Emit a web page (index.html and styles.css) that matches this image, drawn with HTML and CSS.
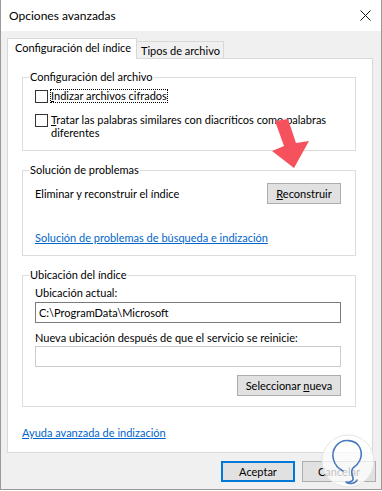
FILE: index.html
```html
<!DOCTYPE html>
<html>
<head>
    <title>Opciones avanzadas</title>
    <link rel="stylesheet" href="styles.css">
</head>
<body>
    <div class="window">
        <div class="titlebar">
            <span class="title">Opciones avanzadas</span>
            <svg class="close" width="11" height="11" viewBox="0 0 11 11">
                <path d="M0.5 0.5 L10.5 10.5 M10.5 0.5 L0.5 10.5" stroke="#111" stroke-width="1" fill="none"/>
            </svg>
        </div>

        <div class="tabs">
            <div class="tab active">Configuración del índice</div>
            <div class="tab">Tipos de archivo</div>
        </div>

        <div class="panel">
            <fieldset class="group first">
                <legend>Configuración del archivo</legend>
                <label class="check">
                    <span class="box"></span>
                    <span class="focus"><u>I</u>ndizar archivos cifrados</span>
                </label>
                <label class="check two">
                    <span class="box"></span>
                    <span class="text"><u>T</u>ratar las palabras similares con diacríticos como palabras<br>diferentes</span>
                </label>
            </fieldset>

            <fieldset class="group">
                <legend>Solución de problemas</legend>
                <div class="row">
                    <span>Eliminar y reconstruir el índice</span>
                    <button class="btn"><u>R</u>econstruir</button>
                </div>
                <a class="link trouble" href="#">Solución de problemas de búsqueda e indización</a>
            </fieldset>

            <fieldset class="group">
                <legend>Ubicación del índice</legend>
                <div class="label first-label">Ubicación actual:</div>
                <div class="textbox">C:\ProgramData\Microsoft</div>
                <div class="label">Nueva ubicación después de que el servicio se reinicie:</div>
                <div class="textbox disabled"></div>
                <div class="right">
                    <button class="btn wide">Seleccionar <u>n</u>ueva</button>
                </div>
            </fieldset>

            <a class="link help" href="#">Ayuda avanzada de indización</a>
        </div>

        <div class="actions">
            <button class="btn default">Aceptar</button>
            <button class="btn">Cancelar</button>
        </div>

        <!-- red pointer over the dialog -->
        <svg class="arrow" width="382" height="491" viewBox="0 0 382 491">
            <polygon points="275,121 288,119 296,143 309,141 294,168 272,151 284,146" fill="#f5525d"/>
        </svg>

        <!-- watermark -->
        <svg class="mark" width="56" height="58" viewBox="0 0 56 58">
            <circle cx="27" cy="29" r="26" fill="#ffffff" fill-opacity="0.75" stroke="#e4e4e4" stroke-width="1"/>
            <path d="M22 39 C12 34 9 22 15 14 C21 6 35 7 39 16 C43 25 37 33 32 36 C30 38 31 43 32 46 C33 49 28 51 25 50 C29 53 35 51 36 48"
                  stroke="#4a78bd" stroke-width="1.6" fill="none" stroke-linecap="round" stroke-linejoin="round"/>
        </svg>
    </div>
</body>
</html>
```

FILE: styles.css
```css
* { box-sizing: border-box; }
body { margin: 0; font-family: "Segoe UI", Lato, "Liberation Sans", sans-serif; font-size: 11px; color: #000; }

.window { position: relative; width: 382px; height: 490px; background: #f0f0f0; border: 1px solid #9a9a9a; border-top: none; }

.titlebar { height: 31px; background: #fff; display: flex; align-items: center; justify-content: space-between; padding: 0 10px 0 8px; }
.title { font-size: 12px; line-height: 14px; }
.close { display: block; margin-top: -1px; }

.tabs { display: flex; align-items: flex-end; margin-top: 7px; padding-left: 6px; height: 20px; white-space: nowrap; }
.tab { height: 17px; line-height: 14px; padding: 2px 0 0 4px; border: 1px solid #d9d9d9; border-bottom: none; background: #f0f0f0; width: 88px; margin-left: -1px; }
.tab.active { position: relative; z-index: 1; height: 21px; width: 130px; margin: 0 0 -1px 0; padding: 2px 0 0 7px; background: #fff; }

.panel { width: 366px; margin-left: 6px; background: #fff; border: 1px solid #d9d9d9; padding: 11px 0 12px 0; }

.group { margin: 12px 16px 0 14px; padding: 6px 14px 10px 12px; border: 1px solid #dcdcdc; min-width: 0; }
.group.first { margin-top: 0; padding-top: 5px; padding-bottom: 11px; }
.group legend { padding: 0 1px; margin-left: -6px; line-height: 14px; }

.check { display: flex; align-items: flex-start; line-height: 14px; white-space: nowrap; }
.check .box { width: 13px; height: 13px; border: 1px solid #333; background: #fff; margin-top: 1px; flex: none; }
.check .focus { margin-left: 2px; padding: 0 1px; outline: 1px dotted #000; outline-offset: -1px; }
.check.two { margin-top: 10px; line-height: 13px; }
.check .text { margin-left: 3px; }

.row { display: flex; align-items: center; justify-content: space-between; height: 21px; }
.btn { font-family: inherit; font-size: 11px; color: #000; width: 74px; height: 21px; padding: 0; background: #e1e1e1; border: 1px solid #adadad; line-height: 14px; white-space: nowrap; }
.btn.wide { width: 104px; }
.btn.default { border: 2px solid #0078d7; }

.link { display: block; color: #0066cc; text-decoration: underline; line-height: 14px; white-space: nowrap; }
.trouble { margin-top: 27px; }
.help { margin: 19px 0 0 14px; width: max-content; }

.label { line-height: 14px; margin-top: 8px; white-space: nowrap; }
.label.first-label { margin-top: -2px; }
.textbox { height: 21px; border: 1px solid #7a7a7a; padding: 2px 0 0 3px; line-height: 15px; margin-top: 2px; }
.textbox.disabled { border-color: #cccccc; margin-top: 1px; }
.right { display: flex; justify-content: flex-end; margin-top: 8px; }

.actions { display: flex; justify-content: flex-end; gap: 7px; margin-top: 8px; padding-right: 5px; }

.arrow { position: absolute; left: -1px; top: 0; pointer-events: none; }
.mark { position: absolute; left: 320px; top: 432px; }
```
